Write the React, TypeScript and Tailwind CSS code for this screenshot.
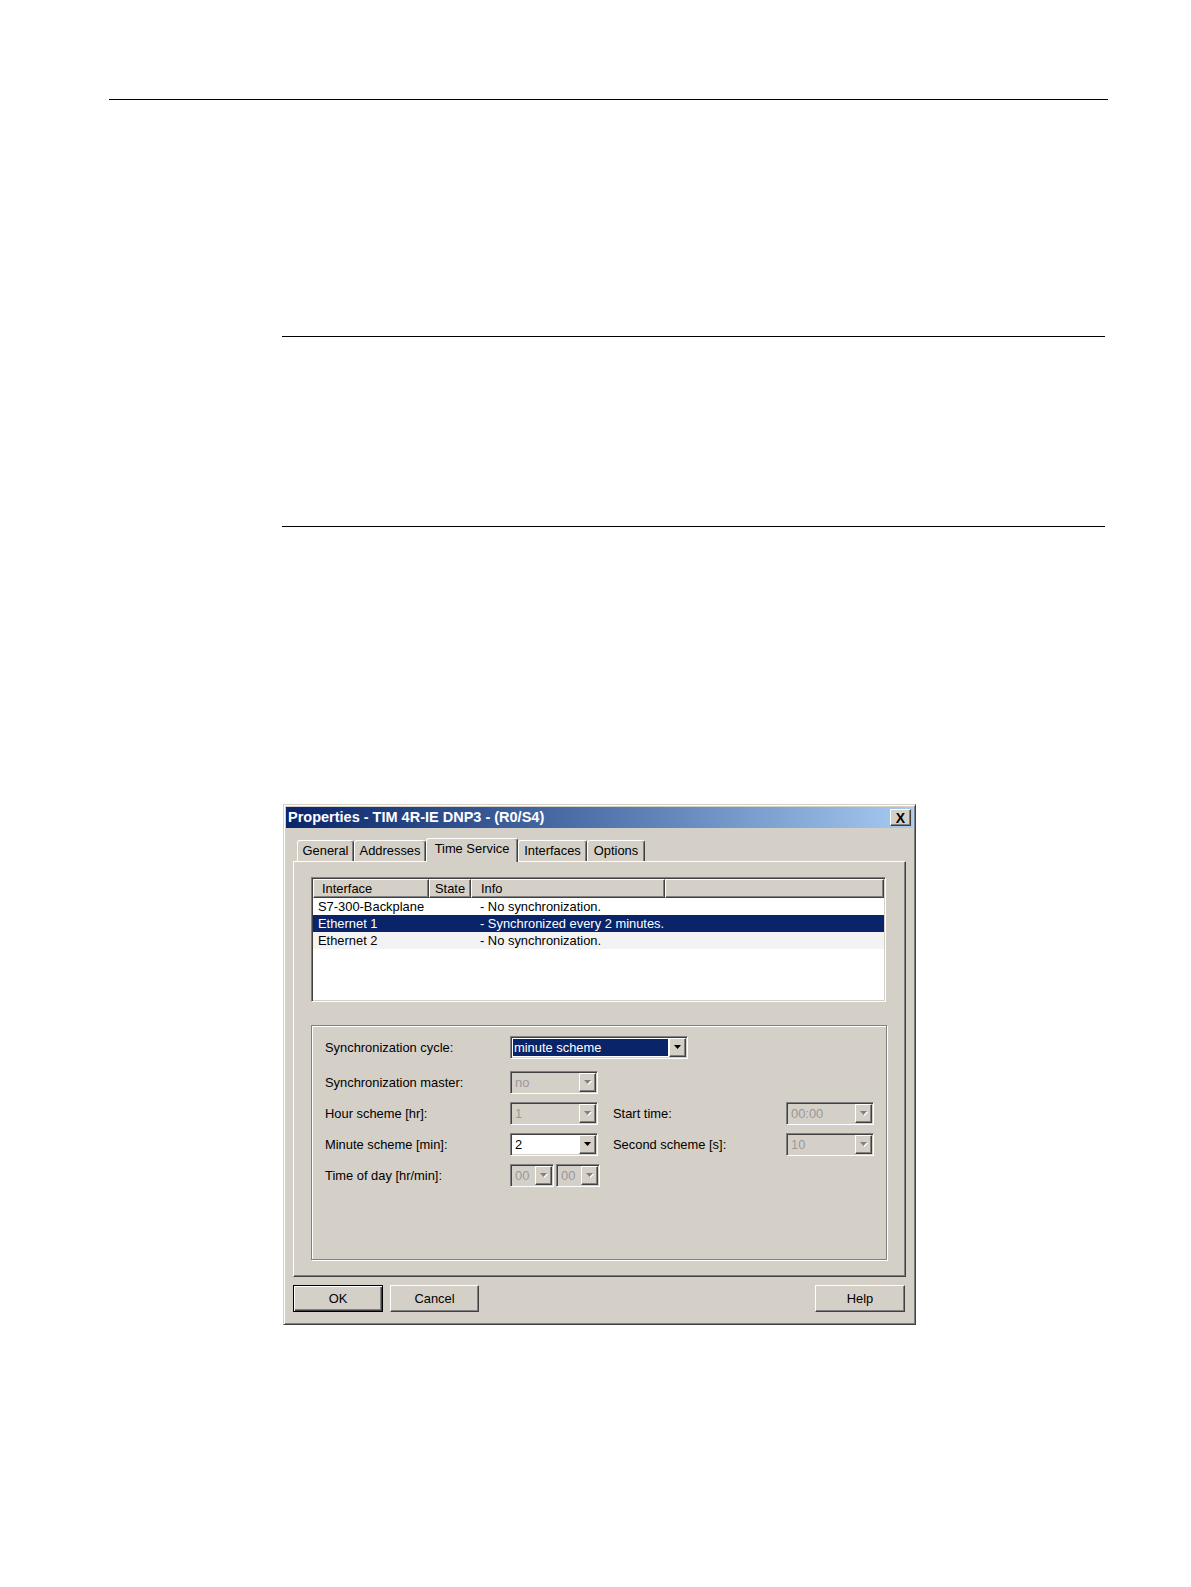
import React from 'react';

const raised =
  'border border-t-white border-l-white border-r-[#404040] border-b-[#404040] shadow-[inset_-1px_-1px_0_#808080]';
const sunken =
  'border border-t-[#808080] border-l-[#808080] border-r-white border-b-white shadow-[inset_1px_1px_0_#404040,inset_-1px_-1px_0_#d4d0c8]';

function Arrow({ disabled }: { disabled?: boolean }) {
  return (
    <svg width="8" height="5" viewBox="0 0 8 5" className="overflow-visible">
      {disabled && <polygon points="1,1 8,1 4.5,5" fill="#ffffff" />}
      <polygon points="0,0 7,0 3.5,4" fill={disabled ? '#808080' : '#000000'} />
    </svg>
  );
}

interface ComboProps {
  width: string;
  value: string;
  disabled?: boolean;
  highlight?: boolean;
}

function Combo({ width, value, disabled, highlight }: ComboProps) {
  return (
    <div className={`${width} ${sunken} flex h-[23px] ${disabled ? 'bg-[#d4d0c8]' : 'bg-white'}`}>
      <div className="flex flex-1 items-center p-[2px] pr-[1px] min-w-0">
        {highlight ? (
          <div className="flex h-full w-full items-center bg-[#0a246a] pl-[1px] text-white">{value}</div>
        ) : (
          <span className={`pl-[2px] ${disabled ? 'text-[#999999]' : 'text-black'}`}>{value}</span>
        )}
      </div>
      <div className={`${raised} m-[1px] ml-0 flex w-[17px] items-center justify-center bg-[#d4d0c8]`}>
        <Arrow disabled={disabled} />
      </div>
    </div>
  );
}

const tabs = [
  { label: 'General', w: 'w-[57px]' },
  { label: 'Addresses', w: 'w-[72px]' },
  { label: 'Time Service', w: 'w-[92px]', active: true },
  { label: 'Interfaces', w: 'w-[69px]' },
  { label: 'Options', w: 'w-[58px]' },
];

const rows = [
  { name: 'S7-300-Backplane', info: '- No synchronization.' },
  { name: 'Ethernet 1', info: '- Synchronized every 2 minutes.', selected: true },
  { name: 'Ethernet 2', info: '- No synchronization.', shaded: true },
];

export default function App() {
  return (
    <div className="h-[1587px] w-[1191px] overflow-hidden bg-white pt-[99px] font-['Liberation_Sans',Arial,sans-serif] text-[12.9px] text-black">
      <div className="ml-[109px] h-px w-[999px] bg-black" />
      <div className="ml-[282px] mt-[236px] h-px w-[823px] bg-black" />
      <div className="ml-[282px] mt-[189px] h-px w-[823px] bg-black" />

      {/* Dialog */}
      <div className="ml-[283px] mt-[277px] flex h-[521px] w-[633px] flex-col border border-t-[#d4d0c8] border-l-[#d4d0c8] border-r-[#404040] border-b-[#404040] bg-[#d4d0c8] p-[2px] shadow-[inset_1px_1px_0_#fff,inset_-1px_-1px_0_#808080]">
        {/* Title bar */}
        <div className="flex h-[21px] items-center justify-between bg-gradient-to-r from-[#0a246a] to-[#a6caf0] pl-[2px] pr-[2px]">
          <span className="text-[14.5px] font-bold leading-none text-white">Properties - TIM 4R-IE DNP3 - (R0/S4)</span>
          <div className={`${raised} flex h-[17px] w-[21px] items-center justify-center bg-[#d4d0c8] text-[14px] font-bold leading-none`}>
            X
          </div>
        </div>

        <div className="px-[7px]">
          {/* Tabs */}
          <div className="mt-[10px] flex h-[23px] items-end pl-[4px]">
            {tabs.map((t) => (
              <div
                key={t.label}
                className={`${t.w} flex items-center justify-center rounded-t-[3px] border-l border-t border-r border-l-white border-t-white border-r-[#404040] bg-[#d4d0c8] shadow-[inset_-1px_0_0_#808080] ${
                  t.active ? 'relative z-10 mb-[-1px] h-[24px] pb-[3px]' : 'h-[21px]'
                }`}
              >
                {t.label}
              </div>
            ))}
          </div>

          {/* Tab panel */}
          <div className="h-[416px] border border-t-white border-l-white border-r-[#404040] border-b-[#404040] pl-[17px] pt-[15px] shadow-[inset_-1px_-1px_0_#808080]">
            {/* List view */}
            <div className={`${sunken} flex h-[125px] w-[575px] flex-col bg-white p-[1px]`}>
              <div className="flex h-[19px] bg-[#d4d0c8]">
                <div className={`${raised} flex w-[116px] items-center pl-[8px]`}>Interface</div>
                <div className={`${raised} flex w-[42px] items-center pl-[5px]`}>State</div>
                <div className={`${raised} flex w-[194px] items-center pl-[9px]`}>Info</div>
                <div className={`${raised} flex-1`} />
              </div>
              {rows.map((r) => (
                <div
                  key={r.name}
                  className={`flex h-[17px] items-center ${
                    r.selected ? 'bg-[#0a246a] text-white' : r.shaded ? 'bg-[#f3f3f3]' : ''
                  }`}
                >
                  <span className="w-[158px] pl-[5px]">{r.name}</span>
                  <span className="pl-[9px]">{r.info}</span>
                </div>
              ))}
            </div>

            {/* Group box */}
            <div className="mt-[23px] h-[235px] w-[576px] border border-[#808080] pl-[13px] pt-[10px] shadow-[1px_1px_0_#fff,inset_1px_1px_0_#fff]">
              <div className="flex h-[23px] items-center">
                <span className="w-[185px]">Synchronization cycle:</span>
                <Combo width="w-[178px]" value="minute scheme" highlight />
              </div>
              <div className="mt-[12px] flex h-[23px] items-center">
                <span className="w-[185px]">Synchronization master:</span>
                <Combo width="w-[88px]" value="no" disabled />
              </div>
              <div className="mt-[8px] flex h-[23px] items-center">
                <span className="w-[185px]">Hour scheme [hr]:</span>
                <Combo width="w-[88px]" value="1" disabled />
                <span className="ml-[15px] w-[173px]">Start time:</span>
                <Combo width="w-[88px]" value="00:00" disabled />
              </div>
              <div className="mt-[8px] flex h-[23px] items-center">
                <span className="w-[185px]">Minute scheme [min]:</span>
                <Combo width="w-[88px]" value="2" />
                <span className="ml-[15px] w-[173px]">Second scheme [s]:</span>
                <Combo width="w-[88px]" value="10" disabled />
              </div>
              <div className="mt-[8px] flex h-[23px] items-center">
                <span className="w-[185px]">Time of day [hr/min]:</span>
                <Combo width="w-[44px]" value="00" disabled />
                <div className="ml-[2px]">
                  <Combo width="w-[44px]" value="00" disabled />
                </div>
              </div>
            </div>
          </div>

          {/* Buttons */}
          <div className="mt-[8px] flex pr-[1px]">
            <div className="flex h-[27px] w-[90px] items-center justify-center border border-black shadow-[inset_1px_1px_0_#fff,inset_-1px_-1px_0_#404040,inset_-2px_-2px_0_#808080]">
              OK
            </div>
            <div className={`${raised} ml-[7px] flex h-[27px] w-[89px] items-center justify-center`}>Cancel</div>
            <div className={`${raised} ml-auto flex h-[27px] w-[90px] items-center justify-center`}>Help</div>
          </div>
        </div>
      </div>
    </div>
  );
}
